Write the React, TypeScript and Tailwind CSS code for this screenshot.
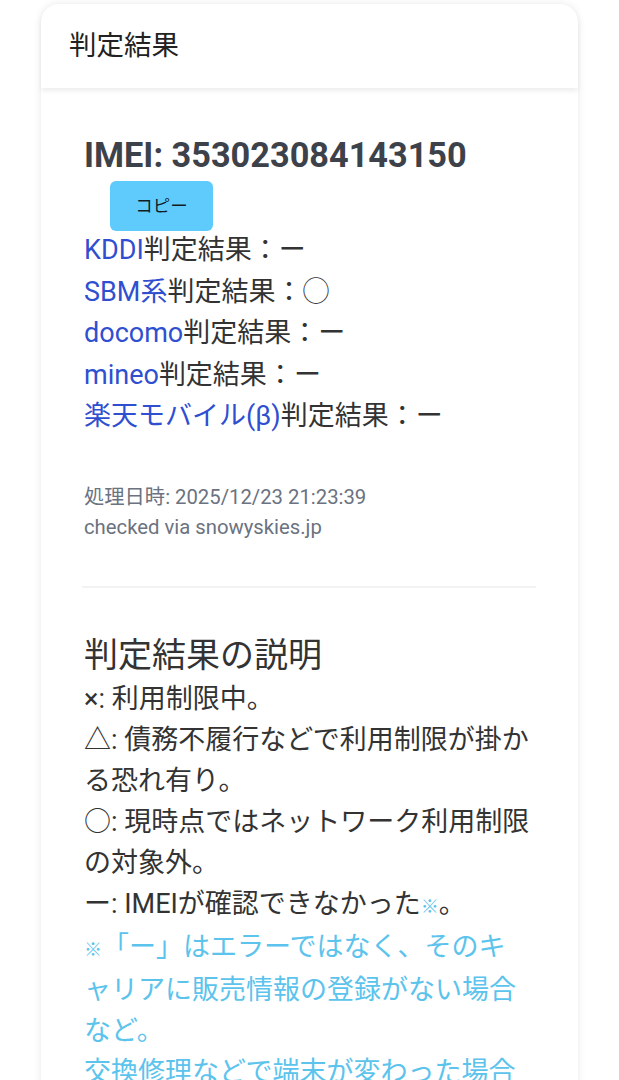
import React from "react";

const font = { fontFamily: "Roboto, 'Noto Sans CJK JP', sans-serif" };

function Row({ carrier, result }: { carrier: string; result: string }) {
  return (
    <div>
      <span className="text-[#2f4fd0]">{carrier}</span>
      <span>判定結果：{result}</span>
    </div>
  );
}

export default function App() {
  return (
    <div className="min-h-screen bg-white pt-[4px]" style={font}>
      <div className="ml-[41px] w-[537px] rounded-t-[18px] bg-white shadow-[0_0_8px_rgba(0,0,0,0.09)]">
        <div className="relative flex h-[84px] items-center rounded-t-[18px] px-[28px] shadow-[0_3px_5px_rgba(0,0,0,0.07)]">
          <h2 className="text-[27.5px] leading-[36px] text-[#222]">判定結果</h2>
        </div>
        <div className="pl-[43px] pr-[42px] pt-[46px] pb-[40px]">
          <div className="text-[34.3px] font-bold leading-[42px] text-[#3d424a]">
            IMEI: 353023084143150
          </div>
          <button className="ml-[26px] mt-[5px] flex h-[50px] w-[103px] items-center justify-center rounded-[6px] bg-[#5fcbfd] text-[17.5px] text-[#111c26]">
            コピー
          </button>
          <div className="-mt-[1px] text-[27px] leading-[41.5px] text-[#333]">
            <Row carrier="KDDI" result="ー" />
            <Row carrier="SBM系" result="◯" />
            <Row carrier="docomo" result="ー" />
            <Row carrier="mineo" result="ー" />
            <Row carrier="楽天モバイル(β)" result="ー" />
          </div>
          <div className="mt-[44px] text-[20.3px] leading-[30px] text-[#6b7280]">
            <div>処理日時: 2025/12/23 21:23:39</div>
            <div>checked via snowyskies.jp</div>
          </div>
          <div className="mt-[44px] -ml-[2px] h-[2px] bg-[#f2f2f2]" />
          <h3 className="mt-[43px] text-[34px] leading-[48px] text-[#333]">判定結果の説明</h3>
          <div className="text-[27px] leading-[41px] text-[#333]">
            <div>×: 利用制限中。</div>
            <div>△: 債務不履行などで利用制限が掛かる恐れ有り。</div>
            <div>○: 現時点ではネットワーク利用制限の対象外。</div>
            <div>
              ー: IMEIが確認できなかった<span className="text-[18px] text-[#5bc3ec]">※</span>。
            </div>
            <div className="text-[#5bc3ec]">
              <span className="text-[18px]">※</span>「ー」はエラーではなく、そのキ
              <br />
              ャリアに販売情報の登録がない場合
              <br />
              など。
            </div>
            <div className="text-[#5bc3ec]">交換修理などで端末が変わった場合</div>
          </div>
        </div>
      </div>
    </div>
  );
}
